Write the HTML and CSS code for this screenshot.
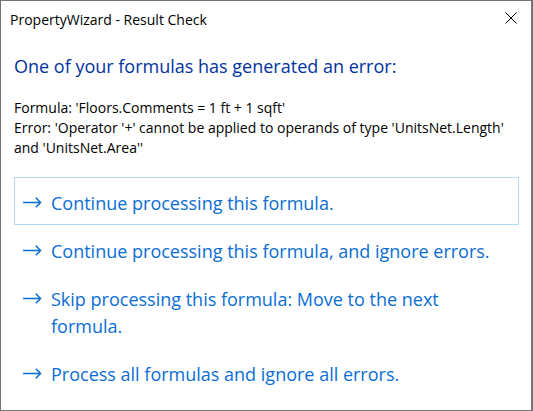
FILE: index.html
```html
<!DOCTYPE html>
<html>
<head>
<meta charset="utf-8">
<title>PropertyWizard - Result Check</title>
<link rel="stylesheet" href="styles.css">
</head>
<body>
<div class="window">
  <div class="titlebar">
    <span class="title">PropertyWizard - Result Check</span>
    <span class="close" aria-label="Close">
      <svg width="12" height="12" viewBox="0 0 12 12"><path d="M0.5 0.5 L11.5 11.5 M11.5 0.5 L0.5 11.5" stroke="#000" stroke-width="1" fill="none"/></svg>
    </span>
  </div>
  <div class="content">
    <h1 class="instruction">One of your formulas has generated an error:</h1>
    <div class="details">
      <p>Formula: 'Floors.Comments = 1 ft + 1 sqft'</p>
      <p>Error: 'Operator '+' cannot be applied to operands of type 'UnitsNet.Length' and 'UnitsNet.Area''</p>
    </div>
    <div class="commands">
      <div class="cmd focused">
        <svg class="arrow" width="19" height="11" viewBox="0 0 19 11"><path d="M0 5.5 H17.5 M12.8 0.8 L17.5 5.5 L12.8 10.2" stroke="currentColor" stroke-width="1.5" fill="none"/></svg>
        <span class="label">Continue processing this formula.</span>
      </div>
      <div class="cmd">
        <svg class="arrow" width="19" height="11" viewBox="0 0 19 11"><path d="M0 5.5 H17.5 M12.8 0.8 L17.5 5.5 L12.8 10.2" stroke="currentColor" stroke-width="1.5" fill="none"/></svg>
        <span class="label">Continue processing this formula, and ignore errors.</span>
      </div>
      <div class="cmd">
        <svg class="arrow" width="19" height="11" viewBox="0 0 19 11"><path d="M0 5.5 H17.5 M12.8 0.8 L17.5 5.5 L12.8 10.2" stroke="currentColor" stroke-width="1.5" fill="none"/></svg>
        <span class="label">Skip processing this formula: Move to the next formula.</span>
      </div>
      <div class="cmd">
        <svg class="arrow" width="19" height="11" viewBox="0 0 19 11"><path d="M0 5.5 H17.5 M12.8 0.8 L17.5 5.5 L12.8 10.2" stroke="currentColor" stroke-width="1.5" fill="none"/></svg>
        <span class="label">Process all formulas and ignore all errors.</span>
      </div>
    </div>
  </div>
</div>
</body>
</html>
```
FILE: styles.css
```css
* { box-sizing: border-box; }
html, body { margin: 0; padding: 0; background: #fff; }
body { font-family: "Open Sans", "Noto Sans", sans-serif; }

.window {
  width: 533px;
  height: 411px;
  border: 1px solid #747474;
  border-right-width: 2px;
  background: #fff;
  display: flex;
  flex-direction: column;
}

.titlebar {
  display: flex;
  justify-content: space-between;
  align-items: flex-start;
  padding: 9px 0 0 9px;
  height: 28px;
}
.title {
  font-size: 14px;
  line-height: 19px;
  color: #000;
}
.close {
  display: flex;
  width: 12px;
  height: 12px;
  margin-top: 2px;
  margin-right: 14px;
}

.content {
  padding: 0 12px 0 13px;
  display: flex;
  flex-direction: column;
}

.instruction {
  margin: 25px 0 0;
  font-size: 18px;
  line-height: 25px;
  font-weight: normal;
  color: #0033a0;
}

.details {
  margin-top: 19px;
  font-size: 14px;
  line-height: 20px;
  color: #000;
}
.details p { margin: 0; }

.commands {
  margin-top: 19px;
  display: flex;
  flex-direction: column;
}

.cmd {
  display: flex;
  align-items: flex-start;
  gap: 9px;
  border: 1px solid transparent;
  padding: 12px 8px 7px 8px;
  font-size: 18px;
  line-height: 27px;
  color: #0a6ed4;
}
.cmd.focused { border-color: #b4d9f5; }

.arrow {
  flex: none;
  margin-top: 7px;
}
.label { flex: 1; }
```
